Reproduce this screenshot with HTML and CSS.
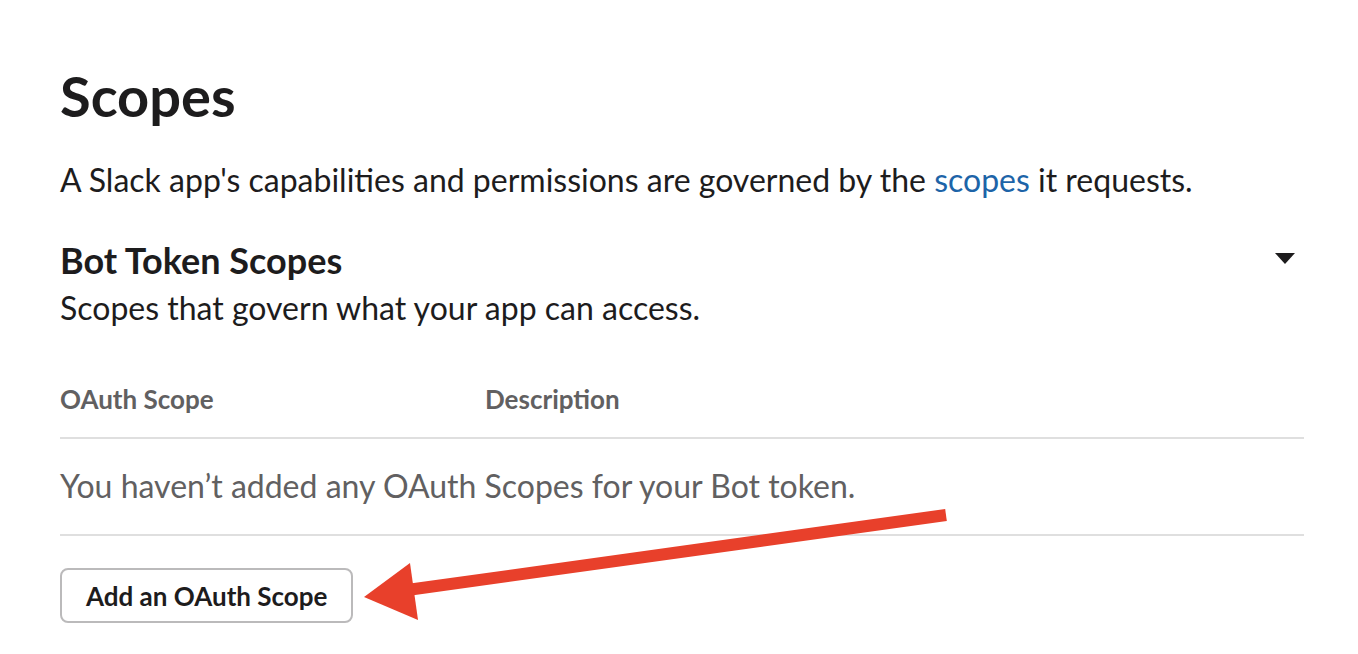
FILE: index.html
```html
<!DOCTYPE html>
<html>
<head>
<meta charset="utf-8">
<link rel="stylesheet" href="styles.css">
</head>
<body>
<main class="page">
  <h1 class="title">Scopes</h1>
  <p class="intro">A Slack app's capabilities and permissions are governed by the <a class="link" href="#">scopes</a> it requests.</p>
  <section class="section">
    <div class="section-head">
      <div>
        <h2 class="section-title">Bot Token Scopes</h2>
        <p class="section-sub">Scopes that govern what your app can access.</p>
      </div>
      <span class="caret" aria-hidden="true"></span>
    </div>
    <div class="table">
      <div class="table-head">
        <span class="col-scope">OAuth Scope</span>
        <span class="col-desc">Description</span>
      </div>
      <div class="table-empty">You haven’t added any OAuth Scopes for your Bot token.</div>
    </div>
    <div class="actions">
      <button class="btn">Add an OAuth Scope</button>
    </div>
  </section>
</main>
<svg class="arrow" width="1358" height="654" viewBox="0 0 1358 654" aria-hidden="true">
  <line x1="946" y1="515" x2="400" y2="591" stroke="#e8402b" stroke-width="12"/>
  <polygon points="364,597 410,563 418,620" fill="#e8402b"/>
</svg>
</body>
</html>
```
FILE: styles.css
```css
html, body {
  margin: 0;
  padding: 0;
  background: #ffffff;
}
body {
  font-family: Lato, "Open Sans", sans-serif;
  color: #1d1c1d;
  position: relative;
  width: 1358px;
  height: 654px;
  overflow: hidden;
}
.page {
  padding: 60px 54px 0 60px;
}
.title {
  margin: 0;
  font-size: 56px;
  font-weight: 700;
  line-height: 72px;
}
.intro {
  margin: 28px 0 0 0;
  font-size: 32px;
  line-height: 40px;
}
.link {
  color: #1d64a8;
  text-decoration: none;
}
.section {
  margin-top: 38px;
}
.section-head {
  display: flex;
  justify-content: space-between;
  align-items: flex-start;
}
.section-title {
  margin: 0;
  font-size: 36px;
  font-weight: 700;
  line-height: 44px;
}
.section-sub {
  margin: 6px 0 0 0;
  font-size: 32px;
  line-height: 40px;
}
.caret {
  width: 0;
  height: 0;
  border-left: 10px solid transparent;
  border-right: 10px solid transparent;
  border-top: 11px solid #1d1c1d;
  margin-top: 15px;
  margin-right: 9px;
}
.table {
  margin-top: 55px;
}
.table-head {
  display: flex;
  font-size: 26px;
  font-weight: 700;
  color: #616061;
  line-height: 32px;
  padding-bottom: 22px;
  border-bottom: 2px solid #dfdfdf;
}
.col-scope {
  width: 425px;
}
.table-empty {
  font-size: 32px;
  color: #616061;
  line-height: 40px;
  padding: 27px 0 28px 0;
  border-bottom: 2px solid #dfdfdf;
}
.actions {
  margin-top: 32px;
}
.btn {
  font-family: Lato, "Open Sans", sans-serif;
  font-size: 26px;
  font-weight: 700;
  color: #1d1c1d;
  background: #ffffff;
  border: 2px solid #bbbabb;
  border-radius: 8px;
  height: 55px;
  padding: 0 24px;
}
.arrow {
  position: absolute;
  left: 0;
  top: 0;
  pointer-events: none;
}
```
